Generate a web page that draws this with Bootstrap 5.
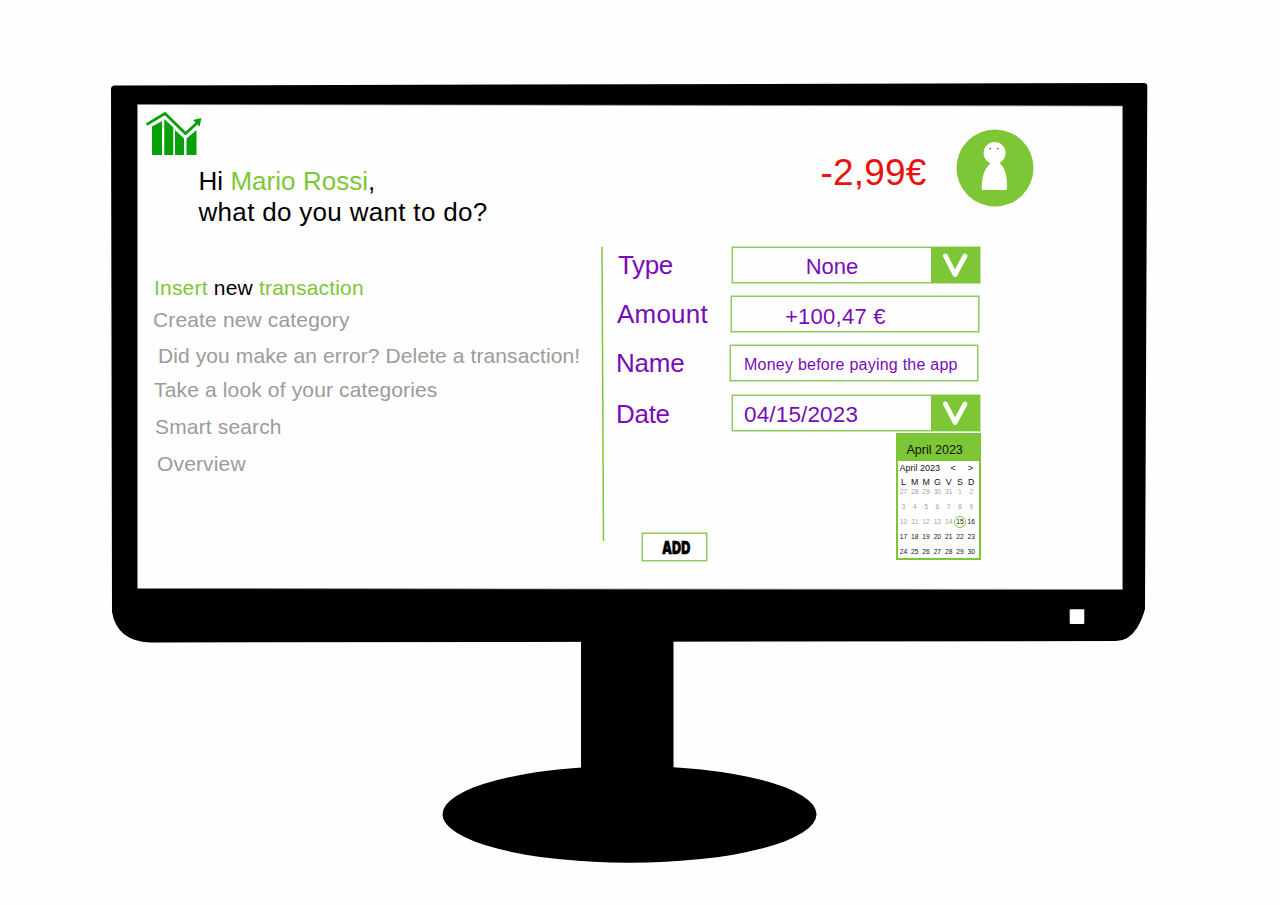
<!DOCTYPE html>
<html lang="en">
<head>
<meta charset="utf-8">
<meta name="viewport" content="width=device-width, initial-scale=1">
<title>Insert new transaction</title>
<link href="https://cdn.jsdelivr.net/npm/bootstrap@5.3.0/dist/css/bootstrap.min.css" rel="stylesheet">
<style>
:root { --lime: #7dc636; --edge: #8fca5c; --violet: #7a0bb8; --muted: #9b9b9b; }
body { font-family: "Liberation Sans", Arial, sans-serif; background: #fefefe; color: #000; margin: 0; }
.stage { width: 1280px; height: 905px; padding: 105px 158px 0 138px; }
.monitor { inset: 0; z-index: 0; }
.app-screen { width: 984px; height: 484px; z-index: 1; }
.lime { color: var(--lime); }
.topbar { height: 141px; padding-left: 8px; padding-right: 89px; }
.logo { margin-top: 6px; }
.greeting { font-size: 26px; line-height: 31px; letter-spacing: .31px; margin: 61px 0 0 -3.5px; font-weight: 400; }
.greeting .hello { letter-spacing: .04px; }
.balance { font-size: 37px; line-height: 44px; color: #ea120e; letter-spacing: .2px; margin: 46px 29px 0 0; }
.avatar { margin-top: 24px; margin-right: -.5px; }

.menu { width: 463px; padding: 27px 0 0 15px; font-size: 21px; line-height: 30px; letter-spacing: .15px; white-space: nowrap; }
.menu a { color: var(--muted); text-decoration: none; display: block; }
.item-insert { margin-left: 1px; letter-spacing: .2px; }
.item-create { margin-top: 2px; }
.item-delete { margin: 6px 0 0 5px; letter-spacing: .1px; }
.item-look { margin: 4px 0 0 1px; }
.item-search { margin: 7px 0 0 2px; }
.item-overview { margin: 7px 0 0 4px; }

.fields { width: 376px; padding-left: 11px; color: var(--violet); }
.field-row { height: 37px; margin-bottom: 12.5px; }
.field-row label { width: 116px; flex: none; font-size: 26px; line-height: 37px; }
.field-row .type-label { padding: 1px 0 0 2px; letter-spacing: -.4px; }
.field-row .amount-label { padding-left: 1px; width: 115px; letter-spacing: .2px; }
.field-row .name-label { width: 114px; letter-spacing: -.2px; }
.field-row .date-label { padding-top: 1px; letter-spacing: -.3px; }
.field-box { width: 248px; height: 36px; flex: none; border: 1px solid var(--edge); box-shadow: 0 0 0 .5px var(--edge); line-height: 36px; font-size: 22px; white-space: nowrap; }
.amount-box { padding: 2px 0 0 53px; letter-spacing: .25px; }
.name-box { padding: 1px 0 0 13px; font-size: 16px; letter-spacing: .24px; }
.type-value { padding-top: 1px; }
.date-value { padding: 1px 0 0 11px; font-size: 22.5px; letter-spacing: .15px; }
.chev { width: 49px; height: 36px; margin: -1px -1px 0 0; background: var(--lime); border: 0; padding: 0; }

.picker { top: 38px; right: 0; width: 85px; height: 127px; background: #fff; border: 2.5px solid var(--lime); border-top: 0; color: #111; line-height: 1; }
.picker-title { height: 28px; background: var(--lime); margin: 0 -2px; padding: 11px 0 0 10.5px; font-size: 12.5px; white-space: nowrap; }
.picker-nav { height: 13px; font-size: 9px; line-height: 13px; padding: 1px 6px 0 1.5px; white-space: nowrap; }
.picker-nav .prev { margin-right: 12px; }
.days { display: grid; grid-template-columns: repeat(7, 11.3px); text-align: center; margin-left: -.2px; }
.days-head { font-size: 8.8px; line-height: 12px; padding-top: 2px; height: 15px; }
.days-grid { font-size: 6.7px; grid-auto-rows: 15.2px; line-height: 6px; }
.days-grid .off { color: #a3a3a3; }
.picked { outline: 1.3px solid var(--lime); border-radius: 50%; width: 10px; height: 10px; margin: -2px auto 0; line-height: 10px; }

.add-btn { width: 65px; height: 28px; margin: 101px 0 0 26px; background: #fff; border: 1px solid var(--edge); box-shadow: 0 0 0 .5px var(--edge); padding: 0; font-family: Inter, sans-serif; font-weight: 900; font-size: 18px; line-height: 27px; color: #000; }
.add-btn span { display: inline-block; transform: translateX(2px) scaleX(.7); -webkit-text-stroke: .6px #000; margin: 0 -8px; }
</style>
</head>
<body>
<div class="stage position-relative overflow-hidden">
  <svg class="monitor position-absolute" width="1280" height="905" viewBox="0 0 1280 905" aria-hidden="true">
    <path d="M114 85.500 Q111 86 111 89 L112 612 Q117 641 150 642.500 L1114 641 Q1128 642 1137 628 Q1142 620 1145 609 L1147.300 86 Q1147 83 1144 83 Z"/>
    <path d="M137.500 104.500 L1122.500 106 L1122.500 589.500 L137.500 588.500 Z" fill="#fefefe" stroke="#888" stroke-width=".7"/>
    <rect x="581" y="640" width="92.500" height="135"/>
    <ellipse cx="629.500" cy="814.300" rx="187" ry="48.500"/>
    <rect x="1069.700" y="609.300" width="14.600" height="14.700" rx="1" fill="#fff"/>
  </svg>

  <main class="app-screen position-relative">
    <header class="topbar d-flex align-items-start">
      <svg class="logo flex-shrink-0" width="56" height="46" viewBox="0 0 56 46" fill="#08a008" role="img" aria-label="Logo">
        <path d="M6 15.500 L16 10 V44 H6 Z M18.300 8 L27.300 16.500 V44 H18.300 Z M29 19 L38 27.500 V44 H29 Z M40.500 27.500 L50.500 19 V44 H40.500 Z"/>
        <path d="M.5 13.500 L19 2.500 L39.500 22.500 L51 12" fill="none" stroke="#08a008" stroke-width="2.800"/>
        <path d="M55.500 7 L53.500 15.500 L47 9 Z"/>
      </svg>
      <h1 class="greeting text-nowrap"><span class="hello">Hi <span class="lime">Mario Rossi</span>,</span><br>what do you want to do?</h1>
      <div class="balance ms-auto">-2,99€</div>
      <svg class="avatar flex-shrink-0" width="78" height="78" viewBox="0 0 78 78" role="img" aria-label="Profile">
        <circle cx="39" cy="39" r="38.500" fill="#7dc636"/>
        <circle cx="38.600" cy="24" r="11" fill="#fff"/>
        <path d="M33.500 32 H44 V34.500 C50 40 51.500 49 50.800 61 H25.800 C25.500 50 27.500 40 34.500 34.500 Z" fill="#fff"/>
        <rect x="33.500" y="19" width="1.300" height="1.200" fill="#222"/><rect x="41.300" y="19" width="1.300" height="1.200" fill="#222"/>
      </svg>
    </header>

    <div class="d-flex align-items-start">
      <nav class="menu">
        <a href="#" class="item-insert"><span class="lime">Insert</span> <span class="text-black">new</span> <span class="lime">transaction</span></a>
        <a href="#" class="item-create">Create new category</a>
        <a href="#" class="item-delete">Did you make an error? Delete a transaction!</a>
        <a href="#" class="item-look">Take a look of your categories</a>
        <a href="#" class="item-search">Smart search</a>
        <a href="#" class="item-overview">Overview</a>
      </nav>
      <svg width="4" height="296" viewBox="0 0 4 296" aria-hidden="true"><path d="M1 1 L2.500 295" stroke="#7dc636" stroke-width="1.500"/></svg>

      <form class="fields">
        <div class="field-row d-flex">
          <label class="type-label">Type</label>
          <div class="field-box mt-auto d-flex"><span class="type-value flex-grow-1 text-center">None</span>
            <button type="button" class="chev" aria-label="Choose type"><svg class="d-block" width="49" height="36" viewBox="0 0 49 36"><path d="M14.500 9 L24 27.500 L34 9" fill="none" stroke="#fff" stroke-width="4.800" stroke-linecap="round" stroke-linejoin="round"/></svg></button>
          </div>
        </div>
        <div class="field-row d-flex">
          <label class="amount-label">Amount</label>
          <div class="field-box amount-box">+100,47 €</div>
        </div>
        <div class="field-row d-flex">
          <label class="name-label">Name</label>
          <div class="field-box name-box">Money before paying the app</div>
        </div>
        <div class="field-row d-flex position-relative">
          <label class="date-label">Date</label>
          <div class="field-box d-flex"><span class="date-value flex-grow-1">04/15/2023</span>
            <button type="button" class="chev" aria-label="Choose date"><svg class="d-block" width="49" height="36" viewBox="0 0 49 36"><path d="M14.500 9 L24 27.500 L34 9" fill="none" stroke="#fff" stroke-width="4.800" stroke-linecap="round" stroke-linejoin="round"/></svg></button>
          </div>
          <div class="picker position-absolute">
            <div class="picker-title">April 2023</div>
            <div class="picker-nav d-flex"><span class="me-auto">April 2023</span><span class="prev">&lt;</span><span>&gt;</span></div>
            <div class="days days-head"><span>L</span><span>M</span><span>M</span><span>G</span><span>V</span><span>S</span><span>D</span></div>
            <div class="days days-grid">
              <span class="off">27</span><span class="off">28</span><span class="off">29</span><span class="off">30</span><span class="off">31</span><span class="off">1</span><span class="off">2</span>
              <span class="off">3</span><span class="off">4</span><span class="off">5</span><span class="off">6</span><span class="off">7</span><span class="off">8</span><span class="off">9</span>
              <span class="off">10</span><span class="off">11</span><span class="off">12</span><span class="off">13</span><span class="off">14</span><span class="picked">15</span><span>16</span>
              <span>17</span><span>18</span><span>19</span><span>20</span><span>21</span><span>22</span><span>23</span>
              <span>24</span><span>25</span><span>26</span><span>27</span><span>28</span><span>29</span><span>30</span>
            </div>
          </div>
        </div>
        <button type="button" class="add-btn d-block"><span>ADD</span></button>
      </form>
    </div>
  </main>
</div>
<script src="https://cdn.jsdelivr.net/npm/bootstrap@5.3.0/dist/js/bootstrap.bundle.min.js"></script>
</body>
</html>
